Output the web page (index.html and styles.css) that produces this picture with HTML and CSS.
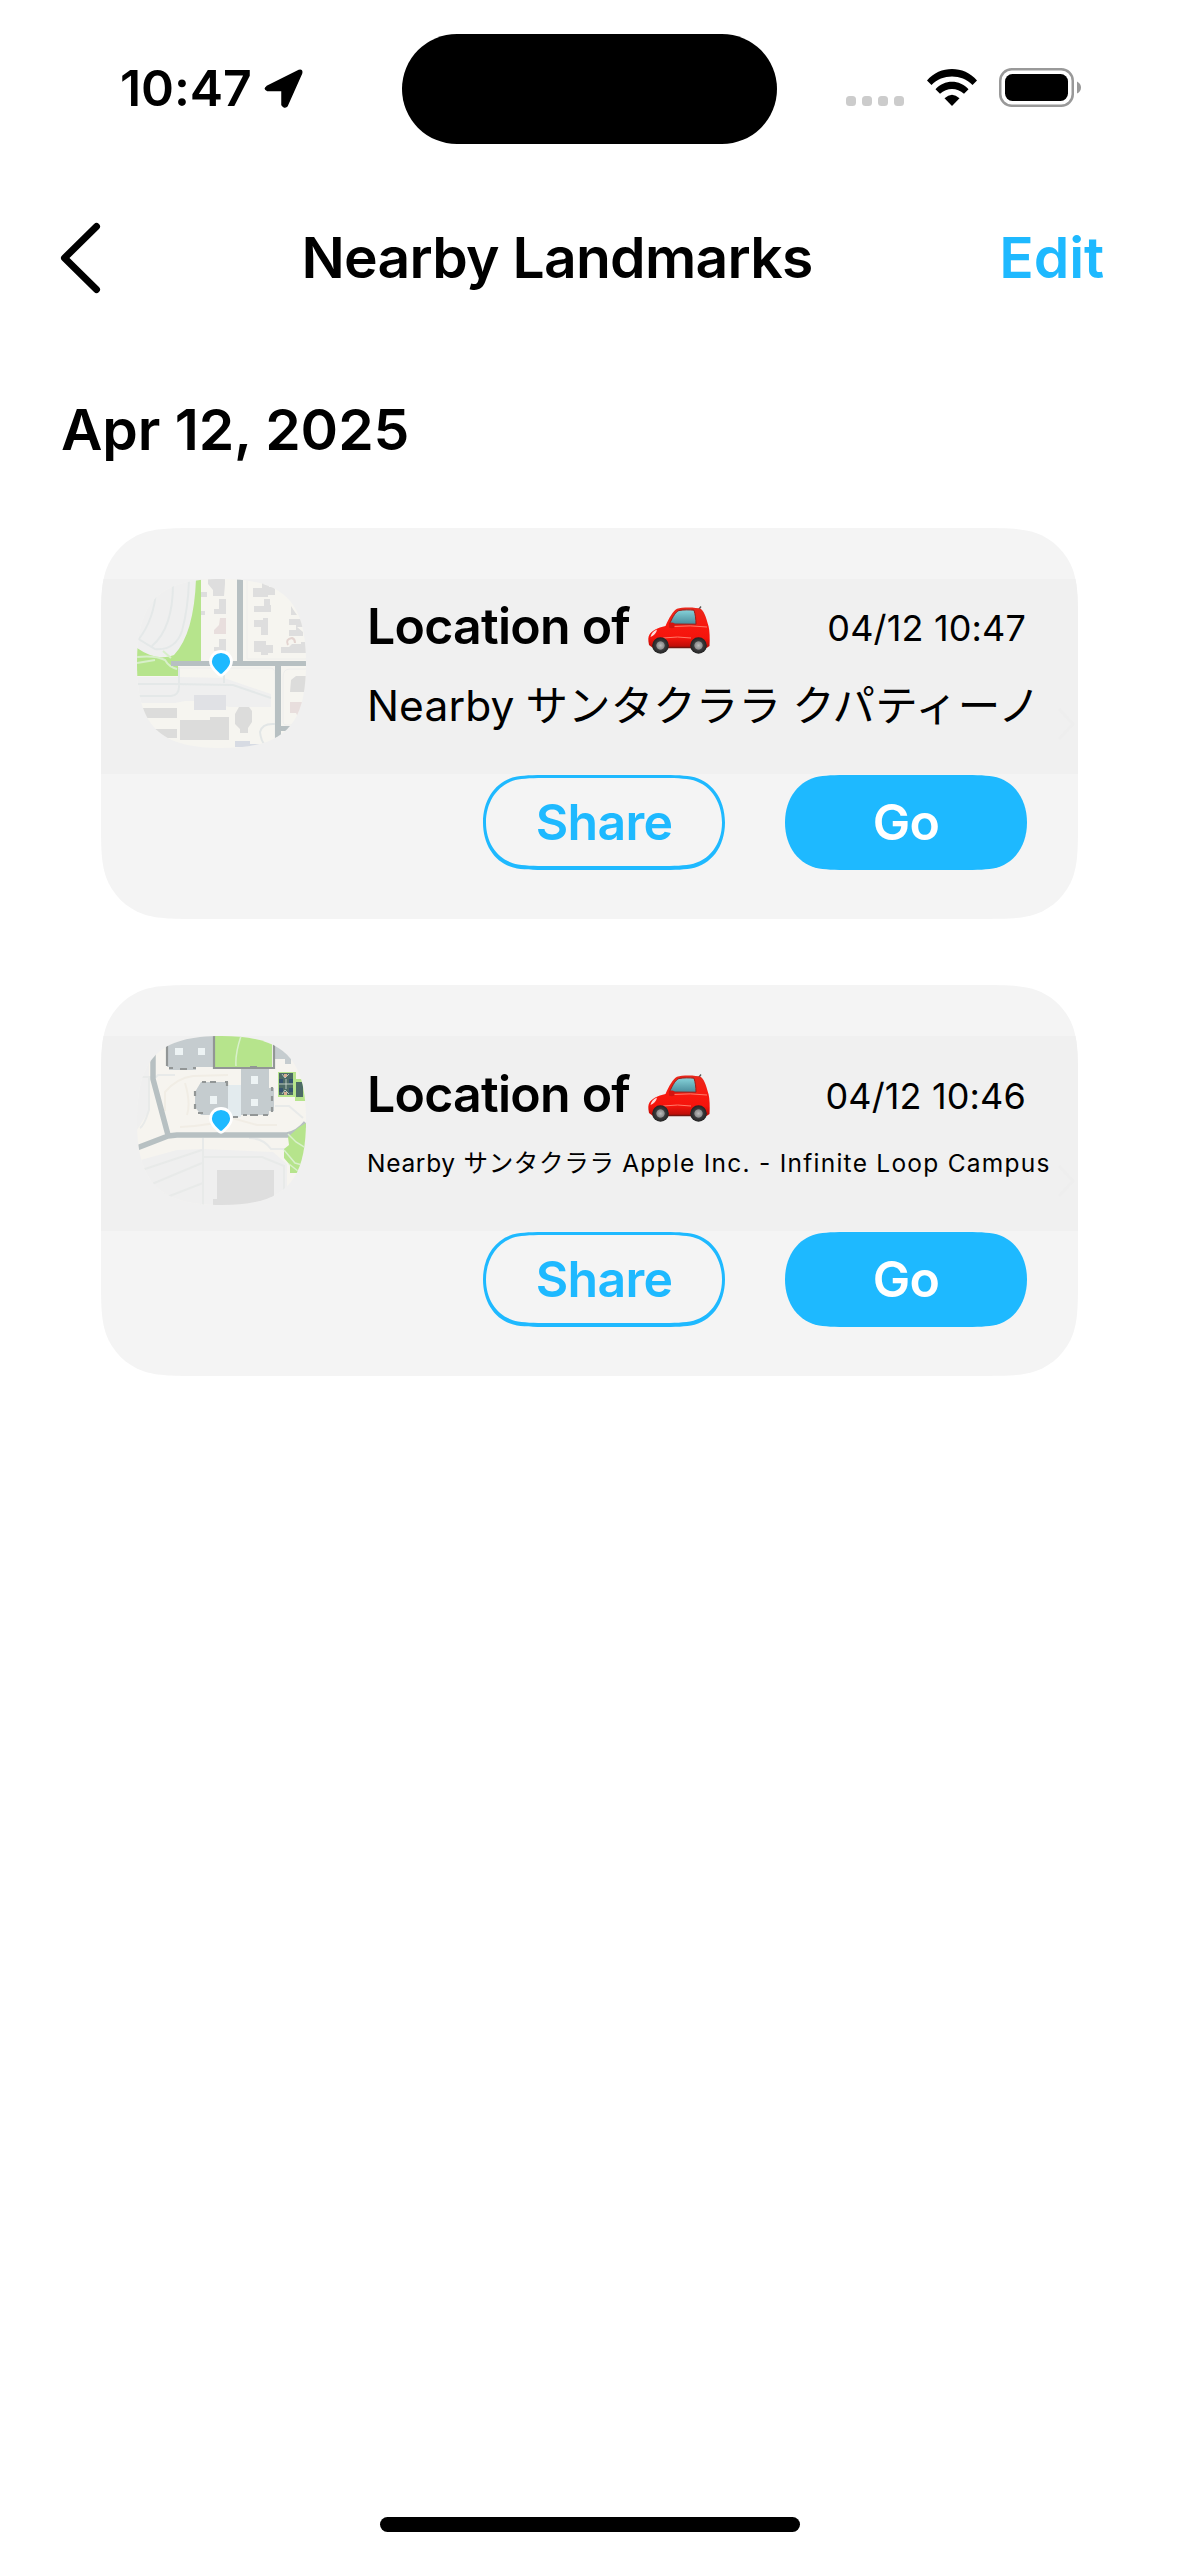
FILE: index.html
```html
<!DOCTYPE html>
<html lang="en">
<head>
<meta charset="utf-8">
<title>Nearby Landmarks</title>
<link rel="stylesheet" href="styles.css">
</head>
<body>
<svg class="defs" width="0" height="0" aria-hidden="true">
  <defs>
    <clipPath id="squircle"><path d="M0 84.5C0 22 22 0 84.5 0S169 22 169 84.5 147 169 84.5 169 0 147 0 84.5Z"/></clipPath>
    <radialGradient id="tire"><stop offset="0" stop-color="#bbb"/><stop offset=".45" stop-color="#8d8d8d"/><stop offset=".55" stop-color="#3b3b3d"/><stop offset="1" stop-color="#222"/></radialGradient>
    <linearGradient id="paint" x1="0" y1="0" x2="0" y2="1"><stop offset="0" stop-color="#e8281c"/><stop offset=".45" stop-color="#f8190f"/><stop offset=".75" stop-color="#f5140c"/><stop offset="1" stop-color="#b30d08"/></linearGradient>
    <linearGradient id="glass" x1="0" y1="0" x2="0" y2="1"><stop offset="0" stop-color="#86d3da"/><stop offset="1" stop-color="#4a8c9b"/></linearGradient>
    <symbol id="car" viewBox="0 0 62 48">
      <path d="M49.500 5L53 .5" stroke="#555" stroke-width="1.300" fill="none"/>
      <path d="M1 39C0 34 0 31 1.500 28.500c2-3.500 8-7 16-8.500C21 12 25 5 29 2.800 34 1 48 1 53 3c4 3 6 12 7.500 17 1.200 5 1.500 12 1 20l-3 2H5Z" fill="url(#paint)"/>
      <path d="M21.500 18C25 10 28 5.500 31 4.500c5-.8 10-.8 15-.3 1.300 4 2 9 2 14Z" fill="url(#glass)" stroke="#9c1d17" stroke-width="1"/>
      <path d="M2.500 31c1-4 3-6 6.500-7.500-.5 3.500-3 6-6.500 7.500Z" fill="#fff" opacity=".85"/>
      <path d="M15 32q15-2 28 0M26 20.500q16-1.500 33 .5" stroke="#ff7a68" stroke-width="1" fill="none"/>
      <path d="M21 17.500q3-2 5.500 0v4q-3 1.500-5.500 0Z" fill="#d31410"/>
      <path d="M20 41.500h23" stroke="#74140f" stroke-width="1.500"/>
      <circle cx="12.500" cy="39.500" r="8.300" fill="url(#tire)"/><circle cx="50.500" cy="39.500" r="8.300" fill="url(#tire)"/>
    </symbol>
    <symbol id="pin" viewBox="0 0 26 27">
      <path d="M13 1.500c6 0 10.500 4.500 10.500 10 0 6-4.500 9-8.300 12.700q-2.200 2-4.400 0C7 20.500 2.500 17.500 2.500 11.500c0-5.500 4.500-10 10.500-10Z" fill="#1eb9ff" stroke="#fff" stroke-width="2.800"/>
    </symbol>
    <symbol id="pill" viewBox="0 0 242 95">
      <path d="M0 47.500C0 23 14 5 34 1.500 43 0 55 0 70 0H172c15 0 27 0 36 1.500 20 3.500 34 21.500 34 46s-14 42.500-34 46c-9 1.500-21 1.500-36 1.500H70c-15 0-27 0-36-1.500C14 90 0 72 0 47.500Z"/>
    </symbol>
    <symbol id="pill-outline" viewBox="0 0 242 95">
      <path fill-rule="evenodd" d="M0 47.500C0 23 14 5 34 1.500 43 0 55 0 70 0H172c15 0 27 0 36 1.500 20 3.500 34 21.500 34 46s-14 42.500-34 46c-9 1.500-21 1.500-36 1.500H70c-15 0-27 0-36-1.500C14 90 0 72 0 47.500ZM3 47.500c0 22 13 38.500 32 42C44 91 56 91 70 91H172c14 0 26 0 35-1.500 19-3.500 32-20 32-42S226 8 207 4.500C198 3 186 3 172 3H70C56 3 44 3 35 4.500 16 8 3 25.500 3 47.500Z"/>
    </symbol>
  </defs>
</svg>

<div class="screen">
  <header class="status">
    <div class="clock">
      <span class="time">10:47</span>
      <svg class="arrow" viewBox="0 0 39 39"><path d="M3 17.500 35 1.500Q38.500 .5 37.500 4.500L23 37q-3 2.500-5-1V21.500H3.500Q-.5 20 3 17.500Z" stroke="#000" stroke-width="1.500" stroke-linejoin="round"/></svg>
    </div>
    <div class="island"></div>
    <div class="indicators">
      <div class="dots"><i></i><i></i><i></i><i></i></div>
      <svg class="wifi" viewBox="0 0 50 37">
        <path d="M0 11.500C13-3.800 37-3.800 50 11.500L45.500 16C34.500 4.800 15.500 4.800 4.500 16Z"/>
        <path d="M8.500 20.300C17 10.300 33 10.300 41.500 20.300L37 24.800C30 18.300 20 18.300 13 24.800Z"/>
        <path d="M17.500 29.300Q25 22 32.500 29.300L25 37Z"/>
      </svg>
      <svg class="battery" viewBox="0 0 82 39">
        <rect x="1.250" y="1.250" width="72.500" height="36.500" rx="11.500" fill="none" stroke="#999" stroke-width="2.500"/>
        <rect x="6" y="6" width="63" height="27" rx="7.500"/>
        <path d="M78 13.500q4 2 4 6t-4 6Z" fill="#999"/>
      </svg>
    </div>
  </header>

  <nav class="navbar">
    <svg class="back" viewBox="0 0 41 72"><path d="M36.500 4.500 4.500 36 36.500 67.500" fill="none" stroke="#000" stroke-width="7" stroke-linecap="round" stroke-linejoin="round"/></svg>
    <h1 class="title">Nearby Landmarks</h1>
    <a class="edit">Edit</a>
  </nav>

  <main class="list">
    <h2 class="day">Apr 12, 2025</h2>

    <article class="card">
      <div class="summary">
        <div class="thumb">
          <svg class="map" viewBox="0 0 169 169">
            <g clip-path="url(#squircle)">
              <path fill="#f6f5f0" d="M0 0h169v169H0z"/>
              <path fill="#efefef" d="M0 0h61Q57 60 37 76 20 82 0 70ZM0 98h42l45 1 47 16v13H92l-20-6H48L38 124H0Z"/>
              <path fill="#b6e48c" d="M59 0h5v83H41v14H0V69q20 14 37 7Q57 55 59 0Z"/>
              <path fill="none" stroke="#e4e8e8" stroke-width="2" d="M19 12Q17 40 2 60M36 5q0 44-21 62M52 2Q51 30 45 52 38 72 18 70L0 59M0 105h36l60 1 38 13M42 88v20q0 8-8 9H0M87 96v8"/>
              <path fill="none" stroke="#d8efca" stroke-width="2" d="M0 78q18-2 28 3 4 7 12 9M0 84l18-3M26 72l8 7"/>
              <path fill="none" stroke="#eeeeec" stroke-width="1" d="M110 0v80h59M42 89h91q5 0 5 6v74M169 90h-16q-7 0-7 8v44q0 5 6 4h17"/>
              <path fill="#b7c0c2" d="M34 82h135v5H34zM100 0h6v83h-6zM138 87h6v82h-6zM143 147h26v5h-26z"/>
              <path fill="#dedede" d="M71 0h17v5l-1 12H76v-6l-5-6zM64 13h6v5h-6zM82 20h7v15H77v-5h5zM64 32h4v4h-4zM82 60h7v12H77v-4h5zM125 3h7v5h6v8h-7v2h-15V9h9zM127 20h6v6h1v7h-17v-6h10zM126 39h5v17h-7v-8h-7v-7h9zM117 62h12v4h7v8h-5v2h-7v-3h-7zM154 27q5 8 6 9h-6zM152 40h14v8h-6l6 5v4h-14v-6h7v-5h-7zM144 68h8l3-3h9v-2h5v11h-25z"/>
              <path fill="#e8dedd" d="M83 39h6v16H77v-4l5-5zM153 123h13v10q0 4-4 5h-1l-2-4h-6z"/>
              <path d="M151 66q-3-6 4-7 3 1 3 5" fill="none" stroke="#e3d4d0" stroke-width="2"/>
              <path fill="#dcdcdb" d="M0 129h40v10H0zM15 150h25v9H15zM43 141h30v-3h19v23H43zM102 128h10l3 4v11l-4 6v5h-8v-4l-5-5v-10zM154 101l5-4h10v16h-16z"/>
              <path fill="#e0e1e5" d="M57 116h32v15H57z"/>
              <path fill="#d7dbe3" d="M98 162h15v3h9v3H98z"/>
              <path d="M138 145q-13-1-15 8 1 10 6 14" fill="none" stroke="#e2e6e6" stroke-width="2"/>
            </g>
          </svg>
          <svg class="pin"><use href="#pin"/></svg>
        </div>
        <div class="info">
          <div class="headline">
            <h3 class="name">Location of <svg class="car" role="img" aria-label="car"><use href="#car"/></svg></h3>
            <time class="stamp">04/12 10:47</time>
          </div>
          <p class="place">Nearby サンタクララ クパティーノ</p>
        </div>
        <svg class="disclosure" viewBox="0 0 18 34"><path d="M2 2 16 17 2 32"/></svg>
      </div>
      <div class="actions">
        <button class="btn share"><svg class="shape"><use href="#pill-outline"/></svg><span>Share</span></button>
        <button class="btn go"><svg class="shape"><use href="#pill"/></svg><span>Go</span></button>
      </div>
    </article>

    <article class="card">
      <div class="summary">
        <div class="thumb">
          <svg class="map" viewBox="0 0 169 169">
            <g clip-path="url(#squircle)">
              <path fill="#f6f4ef" d="M0 0h169v169H0z"/>
              <path fill="#efefef" d="M0 125 40 114l26-1 70 3 14 12v41H0ZM0 20h12v55L0 94Z"/>
              <path fill="none" stroke="#e8eae9" stroke-width="2" d="M5 41h14l2-2h17M66 102v67M66 121h59l22 9v26M5 134l60-20M15 148l50-21M30 161l36-14M12 42v32q-5 16-9 18M112 102q14 0 22 11h14M138 70h14l14 12"/>
              <path fill="none" stroke="#f1ede5" stroke-width="2" d="M28 75V56q12-14 28-16l35-1M48 47q6 20 2 32M43 91q30-1 52-9l25 7h20"/>
              <path fill="none" stroke="#b7c0c2" stroke-width="5.500" stroke-linejoin="round" d="M16 17v26l15 56M0 112 31 100l9-1h110q11-2 19-12"/>
              <path fill="#c5cccf" d="M30 3V0h46v31H59v3H32v-3h-2zM104 32h28v47h-28zM64 46h27v33H64l-6-8V56zM131 52h6v23h-6zM136 4l18 5v19h-6v-5h-12z"/>
              <path fill="#e3ebee" d="M91 49h13v32H91z"/>
              <path fill="#b6e48c" d="M78 0h57v32H78zM161 92l8-5v50h-16v-8l-6-7v-9l5-4-1-8zM141 36h18v7h10v22h-11v-4h-17z"/>
              <path fill="none" stroke="#d9f0cb" stroke-width="1.500" d="M104 0q-6 18-5 30M151 98l8 8 10 6M147 114l11 13 11 3M152 128l14 11"/>
              <path fill="none" stroke="#929696" stroke-width="2.200" d="M77 0v32h60V7M30 8v22M32 32h4M43 33h7M56 32h3M58 55v5M58 68v5M61 77h5M65 46h4M73 46h6M88 46h3M90 46v4M73 79h7M85 79h5M106 79h4M113 79h8M126 79h5M135 51v4M135 60v5M135 71v5M113 31h7M96 81h5"/>
              <path fill="#edf3f4" d="M38 12h8v7h-8zM61 12h7v7h-7zM73 60h7v8h-7zM114 40h7v8h-7zM114 63h7v7h-7z"/>
              <path fill="#4d6b66" d="M142 37h14v22h-14zM159 46h7v15h-7z"/>
              <path fill="#35536f" d="M142 43h4v4h-4zM152 43h4v4h-4zM142 52h4v4h-4zM152 52h4v4h-4z"/>
              <path fill="none" stroke="#d5ded5" stroke-width=".8" d="m145 38 3 4 4-4M142 48h14M145 58l3-4 4 4M149 43v10"/>
              <path fill="#d9ac91" d="M147 38h3v3h-3zM147 56h3v3h-3z"/>
              <path fill="#dedede" d="M80 134h57v35H76v-6h4z"/>
            </g>
          </svg>
          <svg class="pin"><use href="#pin"/></svg>
        </div>
        <div class="info compact">
          <div class="headline">
            <h3 class="name">Location of <svg class="car" role="img" aria-label="car"><use href="#car"/></svg></h3>
            <time class="stamp">04/12 10:46</time>
          </div>
          <p class="place">Nearby サンタクララ <span class="venue">Apple Inc. - Infinite Loop Campus</span></p>
        </div>
        <svg class="disclosure" viewBox="0 0 18 34"><path d="M2 2 16 17 2 32"/></svg>
      </div>
      <div class="actions">
        <button class="btn share"><svg class="shape"><use href="#pill-outline"/></svg><span>Share</span></button>
        <button class="btn go"><svg class="shape"><use href="#pill"/></svg><span>Go</span></button>
      </div>
    </article>
  </main>

  <footer class="home"><div class="home-bar"></div></footer>
</div>
</body>
</html>
```
FILE: styles.css
```css
* { box-sizing: border-box; margin: 0; padding: 0; }
body { background: #fff; color: #000; font-family: Inter, "Noto Sans CJK JP", sans-serif; }
svg { display: block; }
.defs { position: absolute; }
.screen { width: 1179px; height: 2556px; display: flex; flex-direction: column; overflow: hidden; }

/* Status bar */
.status { height: 177px; display: grid; grid-template-columns: 402px 375px 402px; align-items: start; padding-top: 34px; }
.island { height: 110px; border-radius: 55px; background: #000; }
.clock { display: flex; padding: 35px 0 0 120px; }
.time { width: 144px; font-size: 50px; font-weight: 600; line-height: 38px; letter-spacing: -0.1px; white-space: nowrap; }
.arrow { width: 39px; height: 39px; }
.indicators { display: flex; align-items: flex-start; padding: 34px 0 0 69px; }
.dots { display: flex; gap: 6px; padding-top: 28px; }
.dots i { width: 10px; height: 10px; border-radius: 3.500px; background: #ccc; }
.wifi { width: 50px; height: 37px; margin: 1px 22px 0 23px; }
.battery { width: 82px; height: 39px; }

/* Navigation bar */
.navbar { height: 163px; display: grid; grid-template-columns: 190px 1fr 240px; align-items: start; padding: 46px 75px 0 60px; }
.back { width: 41px; height: 72px; margin-top: -1px; }
.title, .edit, .day { font-size: 57px; font-weight: 600; line-height: 70px; white-space: nowrap; }
.title { text-align: center; letter-spacing: -0.75px; margin: 0 -20px; }
.edit { color: #1eb9ff; text-align: right; letter-spacing: -0.1px; }

/* Landmark list */
.list { flex: 1; padding-left: 61px; }
.day { height: 188px; padding-top: 55px; letter-spacing: -0.1px; }
.card { width: 977px; height: 391px; margin: 0 0 66px 40px; padding-top: 51px; background: #f4f4f4;
  clip-path: path("M0 101C0 72 0 57 5 42C11 25 25 11 42 5C57 0 72 0 101 0H876C905 0 920 0 935 5C952 11 966 25 972 42C977 57 977 72 977 101V290C977 319 977 334 972 349C966 366 952 380 935 386C920 391 905 391 876 391H101C72 391 57 391 42 386C25 380 11 366 5 349C0 334 0 319 0 290Z"); }
.summary { height: 195px; display: flex; background: #f0f0f0; padding-left: 36px; }
.thumb { position: relative; flex: none; width: 169px; height: 169px; margin-right: 61px; }
.map { width: 169px; height: 169px; }
.pin { position: absolute; left: 71px; top: 71px; width: 26px; height: 27px; }
.info { flex: none; width: 690px; padding-top: 15px; }
.headline { display: flex; justify-content: space-between; align-items: center; width: 659px; height: 64px; }
.name { display: flex; align-items: center; font-size: 50px; font-weight: 600; letter-spacing: -0.75px; white-space: pre; }
.car { width: 62px; height: 48px; margin: 7px 0 0 6px; }
.stamp { font-size: 36px; line-height: 44px; margin-top: 4px; letter-spacing: 0.15px; white-space: nowrap; }
.place { font-size: 42.500px; line-height: 60px; margin-top: 18px; letter-spacing: 0.1px; word-spacing: -1px; white-space: nowrap; }
.compact { padding-top: 26px; }
.compact .place { font-size: 24.500px; line-height: 36px; letter-spacing: 0.7px; word-spacing: 0; margin-top: 19px; }
.compact .venue { letter-spacing: 1.250px; }
.disclosure { flex: none; width: 18px; height: 34px; margin-top: 128px; fill: none; stroke: #eee; stroke-width: 3; }
.actions { display: flex; justify-content: flex-end; gap: 60px; padding: 1px 51px 0 0; }
.btn { position: relative; width: 242px; height: 95px; border: 0; background: none; font: 600 50px/95px Inter, sans-serif; color: #1eb9ff; letter-spacing: -0.7px; }
.btn span { position: relative; }
.btn.go { color: #fff; }
.shape { position: absolute; left: 0; top: 0; width: 242px; height: 95px; fill: #1eb9ff; }

/* Home indicator */
.home { height: 39px; display: flex; justify-content: center; }
.home-bar { width: 420px; height: 15px; border-radius: 8px; background: #000; }
```
